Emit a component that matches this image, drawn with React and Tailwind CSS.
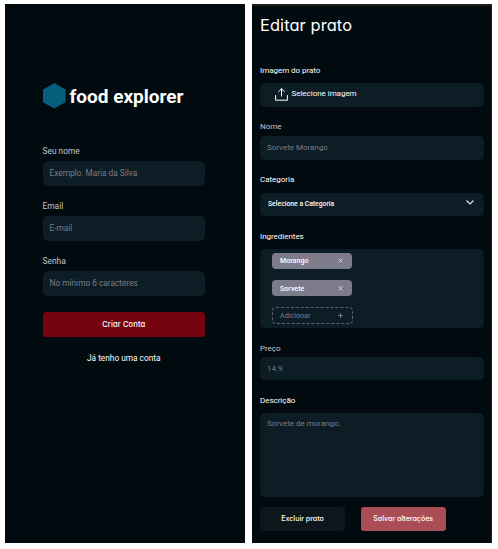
import React from 'react';

function Field({ label, placeholder, className = '' }) {
  return (
    <label className={`block ${className}`}>
      <span className="block h-[18px] text-[8.4px] leading-[17px] text-[#c4c4cc]">{label}</span>
      <span className="flex h-[25px] items-center rounded-[5px] bg-[#0d1d25] pl-[7px] text-[8.3px] text-[#7c7c8a]">
        {placeholder}
      </span>
    </label>
  );
}

function Label({ children, className = '' }) {
  return <div className={`text-[8px] leading-[12px] tracking-[-0.03px] ${className}`}>{children}</div>;
}

function Cross() {
  return (
    <svg className="size-[5px]" viewBox="0 0 5 5" fill="none" stroke="#e8e8ee" strokeWidth="0.8">
      <path d="M.5.5l4 4M4.5.5l-4 4" />
    </svg>
  );
}

function Tag({ children }) {
  return (
    <div className="flex h-4 w-20 items-center justify-between rounded-[4px] bg-[#7c7c8a] pl-2 pr-[9px] text-[7.1px] font-medium leading-4 text-white">
      <span className="pt-px">{children}</span>
      <Cross />
    </div>
  );
}

function SignUp() {
  return (
    <section className="h-[539px] w-60 bg-[#000a0f] pl-[37.5px] pr-10 pt-[79px]">
      <div className="flex h-[26px] items-center">
        <svg className="h-[26px] w-[23px] shrink-0" viewBox="0 0 23 26" fill="#065e7c">
          <path d="M11.3 0L22.6 6.5v12.8L11.3 25.6 0 19.3V6.5z" />
        </svg>
        <h1 className="ml-1 whitespace-nowrap pt-px text-[19px] font-bold leading-[26px] text-white">food explorer</h1>
      </div>
      <Field className="mt-[34px]" label="Seu nome" placeholder="Exemplo: Maria da Silva" />
      <Field className="mt-3" label="Email" placeholder="E-mail" />
      <Field className="mt-3" label="Senha" placeholder="No mínimo 6 caracteres" />
      <button className="mt-4 block h-[25px] w-full rounded-[3px] bg-[#750310] font-[Inter,sans-serif] text-[7.6px] font-medium tracking-[0.1px] text-white [font-feature-settings:'cv11']">
        Criar Conta
      </button>
      <div className="mt-[15px] text-center text-[8.3px] leading-3 text-white">Já tenho uma conta</div>
    </section>
  );
}

function EditDish() {
  return (
    <section className="h-[539px] w-60 border-r border-t-2 border-[#1e1e1e] bg-[#000a0f] pl-2 pr-[7px] text-white">
      <h2 className="mt-[7px] h-[25px] whitespace-nowrap font-[Inter,sans-serif] text-[16.4px] leading-6 tracking-[0.1px] [font-feature-settings:'cv11']">Editar prato</h2>
      <Label className="mt-[27px]">Imagem do prato</Label>
      <div className="mt-[6px] flex h-[23.5px] items-center rounded-[5px] bg-[#0d1d25] pl-[15px] text-[8px] tracking-[-0.03px]">
        <svg className="h-[13px] w-[13px]" viewBox="0 0 13 13" fill="none" stroke="#fff" strokeWidth="1" strokeLinecap="round" strokeLinejoin="round">
          <path d="M.6 7.5v4.7h11.8V7.5M6.5 8V.8M3.6 3.7L6.5.8l2.9 2.9" />
        </svg>
        <span className="-mt-[2px] ml-[3.5px]">Selecione imagem</span>
      </div>
      <Label className="mt-[14.5px] text-[#c4c4cc]">Nome</Label>
      <div className="mt-[3px] flex h-[23.5px] items-center rounded-[5px] bg-[#0d1d25] pl-[7px] text-[8px] text-[#7c7c8a]">Sorvete Morango</div>
      <Label className="mt-[14.5px]">Categoria</Label>
      <div className="mt-[6.5px] flex h-[23.5px] items-center justify-between rounded-[5px] bg-[#0d1d25] pl-[8px] pr-[10px] text-[6.8px] font-medium">
        <span>Selecione a Categoria</span>
        <svg className="-mt-[3px] h-[5px] w-2" viewBox="0 0 8 5" fill="none" stroke="#e8e8ee" strokeWidth="1.1">
          <path d="M.5.5L4 4 7.5.5" />
        </svg>
      </div>
      <Label className="mt-[14.5px]">Ingredientes</Label>
      <div className="mt-[6.5px] h-[79px] rounded-[5px] bg-[#0d1d25] pl-3 pt-[3.5px]">
        <Tag>Morango</Tag>
        <div className="mt-[11.5px]">
          <Tag>Sorvete</Tag>
        </div>
        <div className="mt-[11px] flex h-[17px] w-[81px] items-center justify-between rounded-[4px] border border-dashed border-[#60646f] pl-[7px] pr-[9px] text-[7.2px] text-[#7c7c8a]">
          <span className="pt-px">Adicionar</span>
          <svg className="size-[5px]" viewBox="0 0 5 5" stroke="#8a8a96" strokeWidth="0.8">
            <path d="M2.5 0v5M0 2.5h5" />
          </svg>
        </div>
      </div>
      <Label className="mt-[14.5px] text-[#c4c4cc]">Preço</Label>
      <div className="mt-[2px] flex h-[23.5px] items-center rounded-[5px] bg-[#0d1d25] pl-[7px] pt-px text-[8px] text-[#7c7c8a]">14.9</div>
      <Label className="mt-[14.5px]">Descrição</Label>
      <div className="mt-[6.5px] h-[84px] rounded-[5px] bg-[#0d1d25] pl-[7px] pt-[5px] text-[8px] leading-[12px] text-[#7c7c8a]">Sorvete de morango.</div>
      <div className="mt-[10px] flex gap-[15.5px] font-[Inter,sans-serif] text-[7.1px] font-medium [font-feature-settings:'cv11']">
        <button className="h-6 w-[85px] rounded-[3px] bg-[#0d161b]">Excluir prato</button>
        <button className="h-6 w-[85.5px] rounded-[3px] bg-[#ab4d55]">Salvar alterações</button>
      </div>
    </section>
  );
}

export default function App() {
  return (
    <main className="flex h-[549px] w-[498px] gap-[7px] overflow-hidden bg-white pl-[5px] pt-1 font-[Roboto,sans-serif]">
      <SignUp />
      <EditDish />
    </main>
  );
}
